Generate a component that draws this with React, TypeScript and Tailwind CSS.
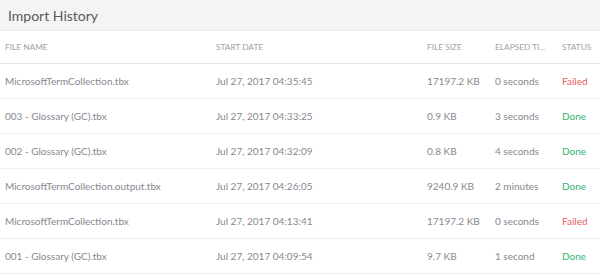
import React from "react";

const rows = [
  { name: "MicrosoftTermCollection.tbx", date: "Jul 27, 2017 04:35:45", size: "17197.2 KB", elapsed: "0 seconds", status: "Failed" },
  { name: "003 - Glossary (GC).tbx", date: "Jul 27, 2017 04:33:25", size: "0.9 KB", elapsed: "3 seconds", status: "Done" },
  { name: "002 - Glossary (GC).tbx", date: "Jul 27, 2017 04:32:09", size: "0.8 KB", elapsed: "4 seconds", status: "Done" },
  { name: "MicrosoftTermCollection.output.tbx", date: "Jul 27, 2017 04:26:05", size: "9240.9 KB", elapsed: "2 minutes", status: "Done" },
  { name: "MicrosoftTermCollection.tbx", date: "Jul 27, 2017 04:13:41", size: "17197.2 KB", elapsed: "0 seconds", status: "Failed" },
  { name: "001 - Glossary (GC).tbx", date: "Jul 27, 2017 04:09:54", size: "9.7 KB", elapsed: "1 second", status: "Done" },
];

const cols = "grid grid-cols-[211px_211px_68px_67px_1fr] items-center";

const App: React.FC = () => {
  return (
    <div className="w-[600px] h-[274px] overflow-hidden bg-white font-['Lato','Open_Sans',sans-serif]">
      {/* Title bar */}
      <div className="h-[31px] bg-[#f4f4f4] border-b border-[#e8ecf0] flex items-center px-[8px]">
        <h2 className="text-[14px] text-[#555a60]">Import History</h2>
      </div>

      {/* Column headings */}
      <div className={`${cols} h-[33px] border-b border-[#e3e8ee] text-[8.3px] text-[#9ea2a8] uppercase`}>
        <div className="px-[5px]">File Name</div>
        <div className="px-[5px]">Start Date</div>
        <div className="px-[5px]">File Size</div>
        <div className="px-[5px] whitespace-nowrap overflow-hidden">Elapsed Ti...</div>
        <div className="px-[5px]">Status</div>
      </div>

      {rows.map((row, i) => (
        <div key={i} className={`${cols} h-[35px] border-b border-[#eceef1] text-[10px] text-[#85898f]`}>
          <div className="px-[5px]">{row.name}</div>
          <div className="px-[5px]">{row.date}</div>
          <div className="px-[5px]">{row.size}</div>
          <div className="px-[5px]">{row.elapsed}</div>
          <div className={row.status === "Failed" ? "px-[5px] text-[#ec5a5e]" : "px-[5px] text-[#30b56f]"}>
            {row.status}
          </div>
        </div>
      ))}
    </div>
  );
};

export default App;
